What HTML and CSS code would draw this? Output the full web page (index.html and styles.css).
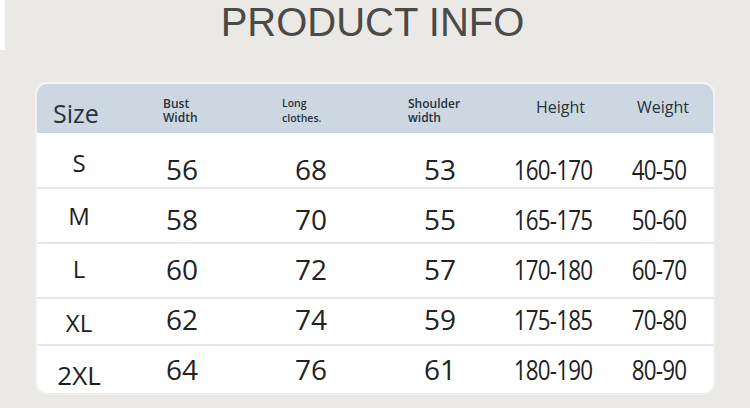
FILE: index.html
```html
<!DOCTYPE html>
<html>
<head>
<meta charset="utf-8">
<link rel="stylesheet" href="styles.css">
</head>
<body>
<div class="page">
  <h1 class="title">PRODUCT INFO</h1>
  <div class="card">
    <div class="head">
      <div class="h-size">Size</div>
      <div class="h-small h-bust">Bust<br>Width</div>
      <div class="h-small h-long">Long<br>clothes.</div>
      <div class="h-small h-shoulder">Shoulder<br>width</div>
      <div class="h-big h-height">Height</div>
      <div class="h-big h-weight">Weight</div>
    </div>
    <div class="row r1">
      <div class="sz">S</div><div class="num">56</div><div class="num">68</div><div class="num">53</div><div class="num"><span class="cond">160-170</span></div><div class="num"><span class="cond">40-50</span></div>
    </div>
    <div class="row r2">
      <div class="sz">M</div><div class="num">58</div><div class="num">70</div><div class="num">55</div><div class="num"><span class="cond">165-175</span></div><div class="num"><span class="cond">50-60</span></div>
    </div>
    <div class="row r3">
      <div class="sz">L</div><div class="num">60</div><div class="num">72</div><div class="num">57</div><div class="num"><span class="cond">170-180</span></div><div class="num"><span class="cond">60-70</span></div>
    </div>
    <div class="row r4">
      <div class="sz">XL</div><div class="num">62</div><div class="num">74</div><div class="num">59</div><div class="num"><span class="cond">175-185</span></div><div class="num"><span class="cond">70-80</span></div>
    </div>
    <div class="row r5">
      <div class="sz sz-big">2XL</div><div class="num">64</div><div class="num">76</div><div class="num">61</div><div class="num"><span class="cond">180-190</span></div><div class="num"><span class="cond">80-90</span></div>
    </div>
  </div>
</div>
</body>
</html>
```

FILE: styles.css
```css
html, body {
  margin: 0;
  padding: 0;
}
body {
  width: 750px;
  height: 408px;
  overflow: hidden;
  background-color: #eae9e5;
  background-image: linear-gradient(#ffffff, #ffffff);
  background-size: 5px 50px;
  background-repeat: no-repeat;
  font-family: "Open Sans", "DejaVu Sans", sans-serif;
}
.page {
  display: flex;
  flex-direction: column;
}
.title {
  margin: 0;
  padding-right: 5px;
  height: 44px;
  font-family: "Liberation Sans", Arial, sans-serif;
  font-weight: 400;
  font-size: 40px;
  line-height: 44px;
  color: #4a4a48;
  text-align: center;
}
.card {
  margin: 40px 0 0 37px;
  width: 676px;
  background: #ffffff;
  border-radius: 10px;
  overflow: hidden;
  box-shadow: 0 0 0 2px rgba(255,255,255,0.55), 0 1px 3px rgba(0,0,0,0.12);
}
.head, .row {
  display: grid;
  grid-template-columns: 84px 122px 136px 122px 104px 108px;
  align-items: start;
}
.head {
  height: 49px;
  background: #ccd7e1;
  color: #28313d;
}
.h-size {
  padding: 17px 0 0 16px;
  font-size: 25px;
  line-height: 25px;
}
.h-small {
  font-size: 12px;
  line-height: 14px;
  font-weight: 600;
  padding-top: 13px;
}
.h-bust { padding-left: 42px; }
.h-long { padding-left: 39px; font-size: 10.5px; padding-top: 12px; line-height: 14.5px; }
.h-shoulder { padding-left: 29px; }
.h-big {
  font-size: 16px;
  line-height: 16px;
  padding-top: 15px;
  font-weight: 500;
}
.h-height { padding-left: 35px; }
.h-weight { padding-left: 32px; }

.row {
  border-top: 2px solid #e6e6e6;
  color: #1e1e1e;
}
.r1 { border-top: none; height: 54px; --sz: 18px; --nm: 22px; }
.r2 { height: 53px; --sz: 15px; --nm: 16px; }
.r3 { height: 53px; --sz: 13px; --nm: 11px; }
.r4 { height: 45px; --sz: 12px; --nm: 6px; }
.r5 { height: 47px; --sz: 16px; --nm: 9px; }

.sz {
  text-align: center;
  font-size: 24px;
  line-height: 24px;
  padding-top: var(--sz);
}
.sz-big { font-size: 26px; line-height: 26px; }
.num {
  text-align: center;
  font-size: 28px;
  line-height: 28px;
  padding-top: var(--nm);
  color: #222222;
}
.cond {
  display: inline-block;
  letter-spacing: -1px;
  transform: scaleX(0.8);
}
```
